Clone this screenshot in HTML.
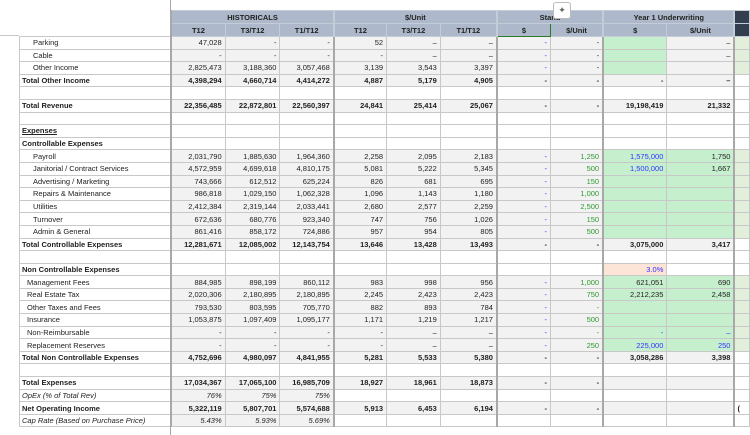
<!DOCTYPE html>
<html><head><meta charset="utf-8"><style>
body{margin:0;width:750px;height:435px;overflow:hidden;background:#fff;font-family:"Liberation Sans",sans-serif;font-size:7.5px;color:#222;position:relative}
table{position:absolute;left:19px;top:10px;border-collapse:collapse;table-layout:fixed}
tr{height:12.6px}
td{padding:0 3px 0 0;height:12.6px;line-height:11px;text-align:right;border:1px solid #c8c8c8;white-space:nowrap;overflow:hidden;box-sizing:border-box}
td.l{text-align:left;padding-left:2px;border-right:2px solid #a8a8a8}
td.i2{padding-left:13px}td.i1{padding-left:7px}
tr.h td{background:#adb9ca;text-align:center;font-weight:bold;padding:0;border-color:#c4ccd8}
tr.h td.n{background:#fff;border:none;border-right:2px solid #a8a8a8}
tr.h td.d{background:#333f4f}
.g{background:#f2f2f2}.gr{background:#c6efce}.lg{background:#e2efda}.pc{background:#fce4d6}
.b{font-weight:bold}.it{font-style:italic}.u{text-decoration:underline}
.bl{color:#3333ff}.gn{color:#2e9a2e}
td.t{border-right:2px solid #a8a8a8}
</style></head><body>
<div style="position:absolute;left:170px;top:0;width:1px;height:10px;background:#a8a8a8"></div>
<div style="position:absolute;left:0;top:35px;width:19px;height:1px;background:#c8c8c8"></div>
<div style="position:absolute;left:170px;top:427px;width:1px;height:8px;background:#a8a8a8"></div>
<table>
<colgroup><col style="width:152px"><col style="width:54px"><col style="width:55px"><col style="width:54px"><col style="width:53px"><col style="width:54px"><col style="width:57px"><col style="width:54px"><col style="width:53px"><col style="width:64px"><col style="width:68px"><col style="width:15px"></colgroup>
<tr class="h" style="height:13px"><td class="n" style="height:13px"></td><td colspan="3" class="t" style="height:13px">HISTORICALS</td><td colspan="3" class="t">$/Unit</td><td colspan="2" class="t">Stand</td><td colspan="2" class="t">Year 1 Underwriting</td><td class="d"></td></tr>
<tr class="h" style="height:13px"><td class="n" style="height:13px"></td><td style="height:13px">T12</td><td>T3/T12</td><td class="t">T1/T12</td><td>T12</td><td>T3/T12</td><td class="t">T1/T12</td><td style="border:1.5px solid #2a7a2a">$</td><td class="t">$/Unit</td><td>$</td><td class="t">$/Unit</td><td class="d"></td></tr>
<tr><td class="l i2">Parking</td><td class="g">47,028</td><td class="g">-</td><td class="g t">-</td><td class="g">52</td><td class="g">–</td><td class="g t">–</td><td class="g bl">-</td><td class="g t">-</td><td class="gr"></td><td class="g t">–</td><td class="lg"></td></tr>
<tr><td class="l i2">Cable</td><td class="g">-</td><td class="g">-</td><td class="g t">-</td><td class="g">-</td><td class="g">–</td><td class="g t">–</td><td class="g bl">-</td><td class="g t">-</td><td class="gr"></td><td class="g t">–</td><td class="lg"></td></tr>
<tr><td class="l i2">Other Income</td><td class="g">2,825,473</td><td class="g">3,188,360</td><td class="g t">3,057,468</td><td class="g">3,139</td><td class="g">3,543</td><td class="g t">3,397</td><td class="g bl">-</td><td class="g t">-</td><td class="gr"></td><td class="g t"></td><td class="lg"></td></tr>
<tr class="b"><td class="l">Total Other Income</td><td class="g">4,398,294</td><td class="g">4,660,714</td><td class="g t">4,414,272</td><td class="g">4,887</td><td class="g">5,179</td><td class="g t">4,905</td><td class="g">-</td><td class="g t">-</td><td class="g">-</td><td class="g t">–</td><td></td></tr>
<tr><td class="l"></td><td></td><td></td><td class="t"></td><td></td><td></td><td class="t"></td><td></td><td class="t"></td><td></td><td class="t"></td><td></td></tr>
<tr class="b"><td class="l">Total Revenue</td><td class="g">22,356,485</td><td class="g">22,872,801</td><td class="g t">22,560,397</td><td class="g">24,841</td><td class="g">25,414</td><td class="g t">25,067</td><td class="g">-</td><td class="g t">-</td><td class="g">19,198,419</td><td class="g t">21,332</td><td></td></tr>
<tr><td class="l"></td><td></td><td></td><td class="t"></td><td></td><td></td><td class="t"></td><td></td><td class="t"></td><td></td><td class="t"></td><td></td></tr>
<tr class="b"><td class="l u">Expenses</td><td></td><td></td><td class="t"></td><td></td><td></td><td class="t"></td><td></td><td class="t"></td><td></td><td class="t"></td><td></td></tr>
<tr class="b"><td class="l">Controllable Expenses</td><td></td><td></td><td class="t"></td><td></td><td></td><td class="t"></td><td></td><td class="t"></td><td></td><td class="t"></td><td></td></tr>
<tr><td class="l i2">Payroll</td><td class="g">2,031,790</td><td class="g">1,885,630</td><td class="g t">1,964,360</td><td class="g">2,258</td><td class="g">2,095</td><td class="g t">2,183</td><td class="g bl">-</td><td class="g t gn">1,250</td><td class="gr bl">1,575,000</td><td class="gr t">1,750</td><td class="lg"></td></tr>
<tr><td class="l i2">Janitorial / Contract Services</td><td class="g">4,572,959</td><td class="g">4,699,618</td><td class="g t">4,810,175</td><td class="g">5,081</td><td class="g">5,222</td><td class="g t">5,345</td><td class="g bl">-</td><td class="g t gn">500</td><td class="gr bl">1,500,000</td><td class="gr t">1,667</td><td class="lg"></td></tr>
<tr><td class="l i2">Advertising / Marketing</td><td class="g">743,666</td><td class="g">612,512</td><td class="g t">625,224</td><td class="g">826</td><td class="g">681</td><td class="g t">695</td><td class="g bl">-</td><td class="g t gn">150</td><td class="gr"></td><td class="gr t"></td><td class="lg"></td></tr>
<tr><td class="l i2">Repairs &amp; Maintenance</td><td class="g">986,818</td><td class="g">1,029,150</td><td class="g t">1,062,328</td><td class="g">1,096</td><td class="g">1,143</td><td class="g t">1,180</td><td class="g bl">-</td><td class="g t gn">1,000</td><td class="gr"></td><td class="gr t"></td><td class="lg"></td></tr>
<tr><td class="l i2">Utilities</td><td class="g">2,412,384</td><td class="g">2,319,144</td><td class="g t">2,033,441</td><td class="g">2,680</td><td class="g">2,577</td><td class="g t">2,259</td><td class="g bl">-</td><td class="g t gn">2,500</td><td class="gr"></td><td class="gr t"></td><td class="lg"></td></tr>
<tr><td class="l i2">Turnover</td><td class="g">672,636</td><td class="g">680,776</td><td class="g t">923,340</td><td class="g">747</td><td class="g">756</td><td class="g t">1,026</td><td class="g bl">-</td><td class="g t gn">150</td><td class="gr"></td><td class="gr t"></td><td class="lg"></td></tr>
<tr><td class="l i2">Admin &amp; General</td><td class="g">861,416</td><td class="g">858,172</td><td class="g t">724,886</td><td class="g">957</td><td class="g">954</td><td class="g t">805</td><td class="g bl">-</td><td class="g t gn">500</td><td class="gr"></td><td class="gr t"></td><td class="lg"></td></tr>
<tr class="b"><td class="l">Total Controllable Expenses</td><td class="g">12,281,671</td><td class="g">12,085,002</td><td class="g t">12,143,754</td><td class="g">13,646</td><td class="g">13,428</td><td class="g t">13,493</td><td class="g">-</td><td class="g t">-</td><td class="g">3,075,000</td><td class="g t">3,417</td><td></td></tr>
<tr><td class="l"></td><td></td><td></td><td class="t"></td><td></td><td></td><td class="t"></td><td></td><td class="t"></td><td></td><td class="t"></td><td></td></tr>
<tr class="b"><td class="l">Non Controllable Expenses</td><td></td><td></td><td class="t"></td><td></td><td></td><td class="t"></td><td></td><td class="t"></td><td class="pc bl" style="font-weight:normal">3.0%</td><td class="t"></td><td></td></tr>
<tr><td class="l i1">Management Fees</td><td class="g">884,985</td><td class="g">898,199</td><td class="g t">860,112</td><td class="g">983</td><td class="g">998</td><td class="g t">956</td><td class="g bl">-</td><td class="g t gn">1,000</td><td class="gr">621,051</td><td class="gr t">690</td><td class="lg"></td></tr>
<tr><td class="l i1">Real Estate Tax</td><td class="g">2,020,306</td><td class="g">2,180,895</td><td class="g t">2,180,895</td><td class="g">2,245</td><td class="g">2,423</td><td class="g t">2,423</td><td class="g bl">-</td><td class="g t gn">750</td><td class="gr">2,212,235</td><td class="gr t">2,458</td><td class="lg"></td></tr>
<tr><td class="l i1">Other Taxes and Fees</td><td class="g">793,530</td><td class="g">803,595</td><td class="g t">705,770</td><td class="g">882</td><td class="g">893</td><td class="g t">784</td><td class="g bl">-</td><td class="g t gn">-</td><td class="gr"></td><td class="gr t"></td><td class="lg"></td></tr>
<tr><td class="l i1">Insurance</td><td class="g">1,053,875</td><td class="g">1,097,409</td><td class="g t">1,095,177</td><td class="g">1,171</td><td class="g">1,219</td><td class="g t">1,217</td><td class="g bl">-</td><td class="g t gn">500</td><td class="gr"></td><td class="gr t"></td><td class="lg"></td></tr>
<tr><td class="l i1">Non-Reimbursable</td><td class="g">-</td><td class="g">-</td><td class="g t">-</td><td class="g">-</td><td class="g">–</td><td class="g t">–</td><td class="g bl">-</td><td class="g t gn">-</td><td class="gr bl">-</td><td class="gr t bl">–</td><td class="lg"></td></tr>
<tr><td class="l i1">Replacement Reserves</td><td class="g">-</td><td class="g">-</td><td class="g t">-</td><td class="g">-</td><td class="g">–</td><td class="g t">–</td><td class="g bl">-</td><td class="g t gn">250</td><td class="gr bl">225,000</td><td class="gr t bl">250</td><td class="lg"></td></tr>
<tr class="b"><td class="l">Total Non Controllable Expenses</td><td class="g">4,752,696</td><td class="g">4,980,097</td><td class="g t">4,841,955</td><td class="g">5,281</td><td class="g">5,533</td><td class="g t">5,380</td><td class="g">-</td><td class="g t">-</td><td class="g">3,058,286</td><td class="g t">3,398</td><td></td></tr>
<tr><td class="l"></td><td></td><td></td><td class="t"></td><td></td><td></td><td class="t"></td><td></td><td class="t"></td><td></td><td class="t"></td><td></td></tr>
<tr class="b"><td class="l">Total Expenses</td><td class="g">17,034,367</td><td class="g">17,065,100</td><td class="g t">16,985,709</td><td class="g">18,927</td><td class="g">18,961</td><td class="g t">18,873</td><td class="g">-</td><td class="g t">-</td><td class="g"></td><td class="g t"></td><td></td></tr>
<tr class="it"><td class="l">OpEx (% of Total Rev)</td><td class="g">76%</td><td class="g">75%</td><td class="g t">75%</td><td></td><td></td><td class="t"></td><td></td><td class="t"></td><td></td><td class="t"></td><td></td></tr>
<tr class="b"><td class="l">Net Operating Income</td><td class="g">5,322,119</td><td class="g">5,807,701</td><td class="g t">5,574,688</td><td class="g">5,913</td><td class="g">6,453</td><td class="g t">6,194</td><td class="g">-</td><td class="g t">-</td><td class="g"></td><td class="g t"></td><td style="text-align:left;padding-left:2px">(</td></tr>
<tr class="it"><td class="l">Cap Rate (Based on Purchase Price)</td><td class="g">5.43%</td><td class="g">5.93%</td><td class="g t">5.69%</td><td></td><td></td><td class="t"></td><td></td><td class="t"></td><td></td><td class="t"></td><td></td></tr>
</table>
<div style="position:absolute;left:553px;top:2px;width:18px;height:17px;background:#fff;border:1px solid #bbb;border-radius:3px;box-sizing:border-box;text-align:center;font-size:9px;line-height:15px;color:#666">✦</div>
</body></html>
